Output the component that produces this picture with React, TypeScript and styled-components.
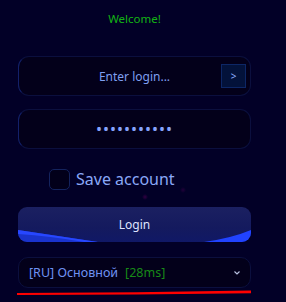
import React from "react";
import styled, { createGlobalStyle } from "styled-components";

const Global = createGlobalStyle`
  html, body { margin: 0; padding: 0; background: #020027; }
  body { font-family: "Noto Sans", "Open Sans", sans-serif; }
  * { box-sizing: border-box; }
`;

const Page = styled.div`
  width: 286px;
  height: 302px;
  padding: 12px 35px 0 18px;
  display: flex;
  flex-direction: column;
  background:
    radial-gradient(circle at 145px 197px, rgba(90, 0, 90, 0.55), transparent 3px),
    radial-gradient(circle at 183px 190px, rgba(70, 0, 80, 0.45), transparent 3px),
    #020027;
`;

const Welcome = styled.div`
  color: #13b313;
  font-size: 11.5px;
  line-height: 14px;
  text-align: center;
  margin-bottom: 30px;
`;

const Field = styled.div<{ $mb: number }>`
  position: relative;
  height: 40px;
  margin-bottom: ${(p) => p.$mb}px;
`;

const TextInput = styled.input`
  width: 100%;
  height: 100%;
  border-radius: 11px;
  border: 1px solid #0b0f3e;
  border-left-color: #13206a;
  background: #03001a;
  color: #8aa6ff;
  text-align: center;
  font-family: "Noto Sans", sans-serif;
  font-size: 12px;
  outline: none;
  &::placeholder { color: #7f9ff0; opacity: 1; }
`;

const PassInput = styled(TextInput)`
  font-size: 16px;
  letter-spacing: 1px;
  color: #86a3ff;
`;

const GoButton = styled.button`
  position: absolute;
  right: 5px;
  top: 8px;
  width: 25px;
  height: 24px;
  padding: 0;
  border: 1px solid #0d2766;
  background: #03123a;
  color: #8fb0ff;
  font-size: 10px;
  font-family: "Noto Sans", sans-serif;
  display: flex;
  align-items: center;
  justify-content: center;
`;

const CheckRow = styled.label`
  display: flex;
  align-items: center;
  gap: 6px;
  padding-left: 31px;
  height: 21px;
  margin-bottom: 17px;
`;

const Box = styled.span`
  width: 21px;
  height: 21px;
  border-radius: 5px;
  border: 1px solid #14235e;
  background: #02001a;
`;

const CheckText = styled.span`
  color: #8aa8f8;
  font-size: 16px;
  line-height: 20px;
  margin-top: -2px;
`;

const LoginBtn = styled.button`
  position: relative;
  overflow: hidden;
  height: 35px;
  border: none;
  border-radius: 9px;
  background: linear-gradient(180deg, #1b2061 0%, #141a5e 60%, #101866 100%);
  color: #dfe3ff;
  font-family: "Noto Sans", sans-serif;
  font-size: 12px;
  padding: 0;
  margin-bottom: 15px;
`;

const Wave = styled.svg`
  position: absolute;
  left: 0;
  top: 0;
`;

const BtnLabel = styled.span`
  position: relative;
`;

const Select = styled.div`
  height: 31px;
  border-radius: 10px;
  border: 1px solid #0b0f3e;
  background: #03001a;
  display: flex;
  align-items: center;
  padding: 0 9px 0 10px;
  font-size: 12.5px;
`;

const Server = styled.span`
  color: #6f92f2;
`;

const Ping = styled.span`
  color: #178a17;
  margin-left: 7px;
`;

const Chevron = styled.svg`
  margin-left: auto;
`;

const Underline = styled.svg`
  display: block;
  margin-left: -2px;
  margin-top: 1px;
`;

export default function App() {
  return (
    <>
      <Global />
      <Page>
        <Welcome>Welcome!</Welcome>
        <Field $mb={13}>
          <TextInput placeholder="Enter login..." />
          <GoButton>&gt;</GoButton>
        </Field>
        <Field $mb={20}>
          <PassInput type="password" defaultValue="password123" />
        </Field>
        <CheckRow>
          <Box />
          <CheckText>Save account</CheckText>
        </CheckRow>
        <LoginBtn>
          <Wave width="233" height="35" viewBox="0 0 233 35">
            <path d="M0,23 Q40,29 80,35 L0,35 Z" fill="#1a33cc" />
            <path d="M0,23 Q40,29 80,35 L66,35 Q32,29 0,27 Z" fill="#2747ff" />
            <path d="M186,35 Q214,31 233,23 L233,35 Z" fill="#2143ff" />
          </Wave>
          <BtnLabel>Login</BtnLabel>
        </LoginBtn>
        <Select>
          <Server>[RU] Основной</Server>
          <Ping>[28ms]</Ping>
          <Chevron width="8" height="6" viewBox="0 0 8 6">
            <path d="M1.5,1.5 L4,4 L6.5,1.5" fill="none" stroke="#b8c0e0" strokeWidth="1.2" />
          </Chevron>
        </Select>
        <Underline width="237" height="6" viewBox="0 0 237 6">
          <path d="M1,4 L120,3.2 L235,1.5 L235,4.2 L120,5.5 L1,6 Z" fill="#ff0000" />
        </Underline>
      </Page>
    </>
  );
}
